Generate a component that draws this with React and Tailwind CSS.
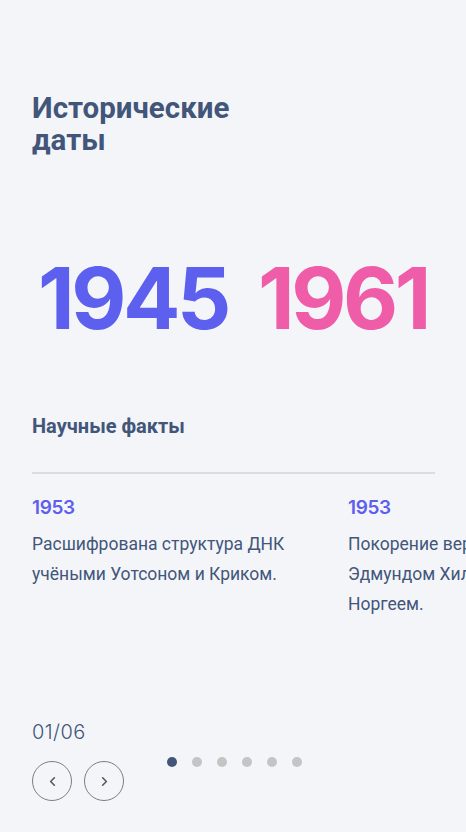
import { ChevronLeft, ChevronRight } from 'lucide-react';

const events = [
  { year: 1953, text: 'Расшифрована структура ДНК учёными Уотсоном и Криком.' },
  { year: 1953, text: 'Покорение вершины Эверест Эдмундом Хиллари и Тенцингом Норгеем.' },
];

const App = () => {
  return (
    <div className="min-h-screen w-full overflow-hidden bg-[#F4F5F9] font-['Roboto',sans-serif] text-[#42567A]">
      <div className="pl-[32px] pt-[92px]">
        <h1 className="text-[29.5px] leading-[32px] font-bold">
          Исторические
          <br />
          даты
        </h1>
      </div>

      <div className="mt-[99px] flex justify-center gap-[30px] font-['Inter',sans-serif] text-[85px] leading-[88px] font-bold tracking-[-0.04em]">
        <span className="text-[#5D5FEF]">1945</span>
        <span className="text-[#EF5DA8]">1961</span>
      </div>

      <div className="pl-[32px] pr-[31px] mt-[71px]">
        <h2 className="text-[20px] leading-[24px] font-bold">Научные факты</h2>
        <div className="mt-[34px] h-[2px] bg-[#DADCE1]" />
      </div>

      <div className="pl-[32px] mt-[22px] flex gap-[6px]">
        {events.map((e, i) => (
          <div key={i} className="w-[310px] shrink-0">
            <div className="font-['Inter',sans-serif] text-[19px] leading-[24px] font-semibold tracking-[-0.02em] text-[#5D5FEF]">{e.year}</div>
            <p className="mt-[9px] text-[17.5px] leading-[30px]">{e.text}</p>
          </div>
        ))}
      </div>

      <div className="pl-[32px] mt-[101px] pb-[31px]">
        <div className="font-['Inter',sans-serif] text-[20px] leading-[24px] font-light tracking-[0.02em]">01/06</div>
        <div className="mt-[17px] flex items-start">
          <div className="flex gap-[12px]">
            <button className="w-[40px] h-[40px] rounded-full border border-[#7E7E7E] flex items-center justify-center text-[#555]">
              <ChevronLeft size={15} strokeWidth={2.5} />
            </button>
            <button className="w-[40px] h-[40px] rounded-full border border-[#7E7E7E] flex items-center justify-center text-[#555]">
              <ChevronRight size={15} strokeWidth={2.5} />
            </button>
          </div>
          <div className="ml-[43px] -mt-[4px] flex gap-[15px]">
            {[0, 1, 2, 3, 4, 5].map((d) => (
              <span key={d} className={`w-[10px] h-[10px] rounded-full ${d === 0 ? 'bg-[#42567A]' : 'bg-[#C4C4C4]'}`} />
            ))}
          </div>
        </div>
      </div>
    </div>
  );
};

export default App;
